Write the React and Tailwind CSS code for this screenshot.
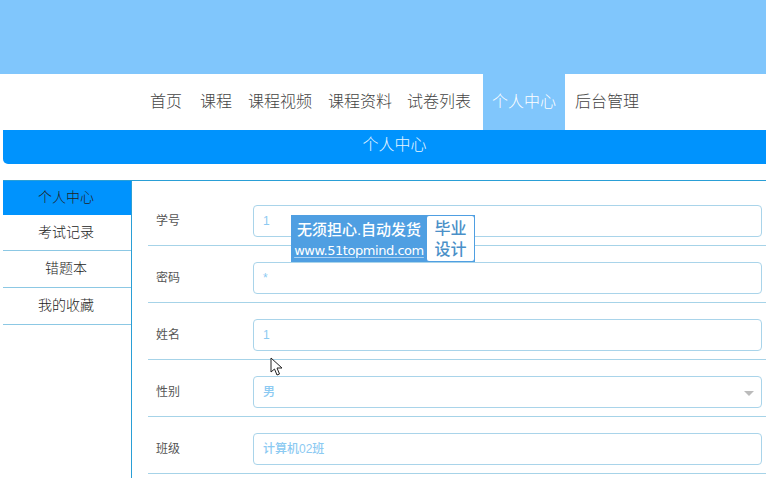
const navItems = [
  { name: '首页', cls: 'px-2 mr-[2px] text-[#444]' },
  { name: '课程', cls: 'px-2 text-[#444]' },
  { name: '课程视频', cls: 'px-2 text-[#444]' },
  { name: '课程资料', cls: 'px-2 -mr-[1px] text-[#444]' },
  { name: '试卷列表', cls: 'px-2 mr-[4px] text-[#444]' },
  { name: '个人中心', cls: 'w-[82px] mr-[2px] text-center bg-[#80c6fc] text-white' },
  { name: '后台管理', cls: 'px-2 text-[#444]' },
];
const sideItems = ['考试记录', '错题本', '我的收藏'];

function Field({ label, value, select }) {
  return (
    <div className="h-[57px] flex items-start border-b border-[#a6d3e8] pl-2 pr-1">
      <label className="w-[97px] mt-[20px] text-[12px] leading-[24px] text-[#555]">{label}</label>
      <div className="relative mt-[16px] flex-1 h-[32px] border border-[#a9d4ea] rounded-[4px] pl-[9px] pr-[10px] text-[12px] leading-[30px] text-[#8ccaf2] font-medium">
        {value}
        {select && (
          <span className="absolute right-[7px] top-[14px] border-x-[5px] border-t-[5px] border-x-transparent border-t-[#bbb]" />
        )}
      </div>
    </div>
  );
}

export default function App() {
  return (
    <div className="relative w-[766px] h-[478px] overflow-hidden bg-white font-['Liberation_Sans','Noto_Sans_CJK_SC',sans-serif]">
      {/* Header band */}
      <div className="h-[74px] bg-[#80c6fc]" />

      {/* Nav */}
      <nav className="h-[56px] flex pl-[142px]">
        {navItems.map((item) => (
          <a key={item.name} className={`text-[16px] leading-[56px] font-light ${item.cls}`}>
            {item.name}
          </a>
        ))}
      </nav>

      {/* Title bar */}
      <div className="ml-[3px] h-[34px] pl-[20px] bg-[#0093fd] rounded-bl-[5px] text-center text-[#e8f6ff] text-[16px] font-light leading-[29px]">
        个人中心
      </div>

      {/* Body */}
      <div className="mt-[16px] ml-[3px] flex border-t border-[#2a9fd6]">
        <aside className="w-[128px] shrink-0">
          <div className="h-[34px] pr-[2px] bg-[#0093fd] text-center text-[14px] font-light leading-[32px] text-[#222]">
            个人中心
          </div>
          {sideItems.map((item, i) => (
            <div
              key={item}
              className={`pr-[2px] border-b border-[#8cc8e4] text-center text-[14px] font-light leading-[34px] text-[#222] ${i === 0 ? 'h-[36px]' : 'h-[37px]'}`}
            >
              {item}
            </div>
          ))}
        </aside>
        <main className="flex-1 border-l border-[#2a9fd6] pl-[16px] pt-[8px] h-[300px]">
          <Field label="学号" value="1" />
          <Field label="密码" value="*" />
          <Field label="姓名" value="1" />
          <Field label="性别" value="男" select />
          <Field label="班级" value="计算机02班" />
        </main>
      </div>

      {/* Watermark */}
      <div className="absolute left-[291px] top-[215px] w-[184px] h-[47px] bg-[#4f9fe2] flex">
        <div className="w-[136px] text-white text-center">
          <div className="text-[15px] leading-[20px] mt-[5px] font-medium whitespace-nowrap">无须担心.自动发货</div>
          <div className="text-[13px] leading-[17px] mt-[2px] whitespace-nowrap font-['DejaVu_Sans',sans-serif] tracking-[-0.45px] underline underline-offset-2 decoration-[#a9d0f2]">www.51topmind.com</div>
        </div>
        <div className="my-[1px] mr-[1px] flex-1 bg-white rounded-[2px] text-[#4a90c8] text-center text-[16px] font-medium leading-[21px] pt-[2px]">
          毕业<br />设计
        </div>
      </div>

      {/* Mouse cursor */}
      <svg className="absolute left-[270px] top-[357px]" width="14" height="20" viewBox="0 0 14 20">
        <path d="M1 1 L1 15 L4.5 12 L7 18 L9.5 17 L7 11 L12 11 Z" fill="white" stroke="#222" strokeWidth="1" />
      </svg>
    </div>
  );
}
